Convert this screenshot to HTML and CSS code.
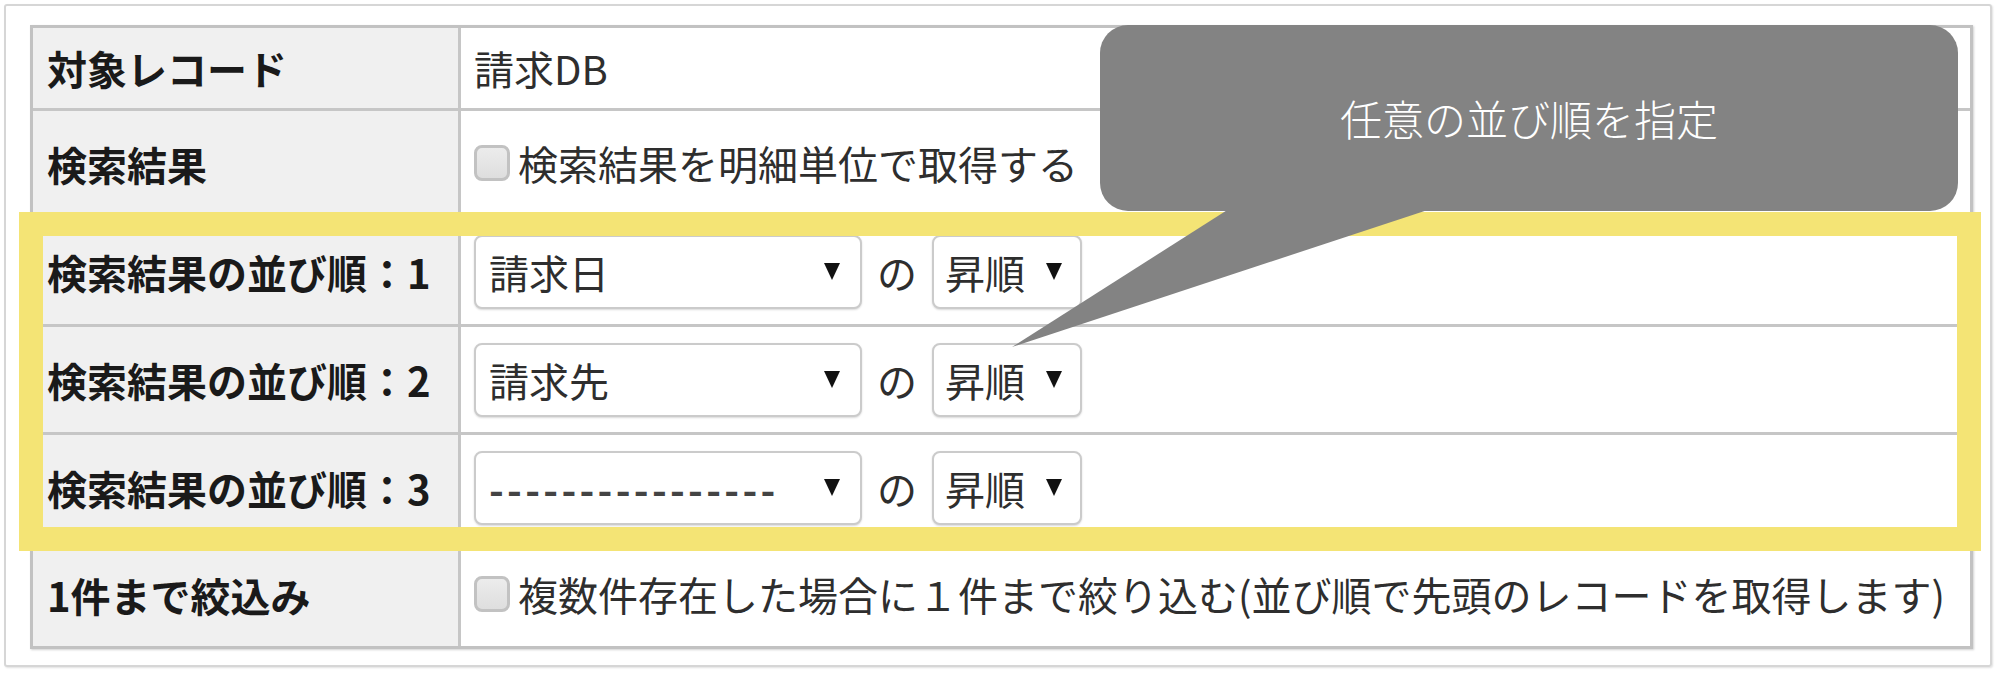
FILE: index.html
```html
<!DOCTYPE html>
<html lang="ja">
<head>
<meta charset="utf-8">
<title>並び順設定</title>
<link rel="stylesheet" href="styles.css">
</head>
<body>
<div class="frame">
  <table class="form">
    <colgroup><col class="c-head"><col></colgroup>
    <tr class="r-short">
      <th>対象レコード</th>
      <td>請求DB</td>
    </tr>
    <tr>
      <th>検索結果</th>
      <td><span class="check"><span class="box"></span>検索結果を明細単位で取得する</span></td>
    </tr>
    <tr>
      <th>検索結果の並び順：1</th>
      <td>
        <div class="sort">
          <div class="select wide"><span>請求日</span><svg class="arrow" viewBox="0 0 16 17"><polygon points="0,0 16,0 8,17"/></svg></div>
          <span class="no">の</span>
          <div class="select narrow"><span>昇順</span><svg class="arrow" viewBox="0 0 16 17"><polygon points="0,0 16,0 8,17"/></svg></div>
        </div>
      </td>
    </tr>
    <tr>
      <th>検索結果の並び順：2</th>
      <td>
        <div class="sort">
          <div class="select wide"><span>請求先</span><svg class="arrow" viewBox="0 0 16 17"><polygon points="0,0 16,0 8,17"/></svg></div>
          <span class="no">の</span>
          <div class="select narrow"><span>昇順</span><svg class="arrow" viewBox="0 0 16 17"><polygon points="0,0 16,0 8,17"/></svg></div>
        </div>
      </td>
    </tr>
    <tr>
      <th>検索結果の並び順：3</th>
      <td>
        <div class="sort">
          <div class="select wide"><span class="dashes">----------------</span><svg class="arrow" viewBox="0 0 16 17"><polygon points="0,0 16,0 8,17"/></svg></div>
          <span class="no">の</span>
          <div class="select narrow"><span>昇順</span><svg class="arrow" viewBox="0 0 16 17"><polygon points="0,0 16,0 8,17"/></svg></div>
        </div>
      </td>
    </tr>
    <tr class="r-last">
      <th>1件まで絞込み</th>
      <td><span class="check"><span class="box"></span>複数件存在した場合に１件まで絞り込む(並び順で先頭のレコードを取得します)</span></td>
    </tr>
  </table>
</div>
<div class="highlight"></div>
<svg class="pointer" viewBox="0 0 2000 673"><polygon points="1243,200 1458,200 1012,347"/></svg>
<div class="callout">任意の並び順を指定</div>
</body>
</html>
```

FILE: styles.css
```css
html, body {
  margin: 0;
  padding: 0;
}
body {
  width: 2000px;
  height: 673px;
  position: relative;
  overflow: hidden;
  background: #ffffff;
  font-family: "Noto Sans CJK JP", "Liberation Sans", sans-serif;
}
.frame {
  position: relative;
  margin: 4px 0 0 4px;
  width: 1988px;
  height: 663px;
  box-sizing: border-box;
  border: 2px solid #d6d6d6;
  border-radius: 3px;
  box-shadow: 1px 1px 2px rgba(0, 0, 0, 0.12);
  padding: 19px 0 0 24px;
}
.form {
  width: 1943px;
  table-layout: fixed;
  border-collapse: separate;
  border-spacing: 0;
  border: 3px solid #c2c2c2;
  box-shadow: 1px 1px 2px rgba(0, 0, 0, 0.18);
  font-size: 40px;
  line-height: 1.2;
}
.c-head {
  width: 428px;
}
.form tr {
  height: 108px;
}
.form tr.r-short {
  height: 83px;
}
.form tr.r-last {
  height: 103px;
}
.form th,
.form td {
  box-sizing: border-box;
  border-bottom: 3px solid #c6c6c6;
  padding: 0 0 0 14px;
  vertical-align: middle;
  white-space: nowrap;
}
.form tr.r-last th,
.form tr.r-last td {
  border-bottom: none;
}
.form th {
  background: #f0f0f0;
  border-right: 3px solid #c6c6c6;
  text-align: left;
  font-weight: 700;
  color: #1a1a1a;
}
.form td {
  background: #ffffff;
  color: #2e2e2e;
  padding-left: 13px;
}
.check {
  display: inline-flex;
  align-items: center;
}
.box {
  display: inline-block;
  width: 36px;
  height: 36px;
  box-sizing: border-box;
  border: 3px solid #c2c2c2;
  border-radius: 8px;
  background: linear-gradient(#ececec, #dedede);
  margin-right: 8px;
}
.sort {
  display: flex;
  align-items: center;
}
.select {
  display: flex;
  align-items: center;
  justify-content: space-between;
  height: 74px;
  box-sizing: border-box;
  border: 2px solid #cbcbcb;
  border-radius: 8px;
  background: #ffffff;
  box-shadow: 0 1px 2px rgba(0, 0, 0, 0.15);
  color: #2e2e2e;
}
.select.wide {
  width: 388px;
  padding: 0 20px 0 13px;
}
.select.narrow {
  width: 150px;
  padding: 0 18px 0 11px;
}
.arrow {
  width: 16px;
  height: 17px;
  fill: #111111;
  flex: none;
}
.dashes {
  letter-spacing: 3.3px;
  font-weight: 700;
  color: #444444;
}
.no {
  margin: 0 15px;
  color: #2e2e2e;
}
.highlight {
  position: absolute;
  left: 19px;
  top: 212px;
  width: 1962px;
  height: 339px;
  box-sizing: border-box;
  border: 24px solid #f4e475;
}
.pointer {
  position: absolute;
  left: 0;
  top: 0;
  width: 2000px;
  height: 673px;
  fill: #838383;
}
.callout {
  position: absolute;
  left: 1100px;
  top: 25px;
  width: 858px;
  height: 186px;
  border-radius: 28px;
  background: #838383;
  color: #ffffff;
  display: flex;
  align-items: center;
  justify-content: center;
  font-size: 42px;
  font-weight: 300;
  line-height: 1;
}
```
